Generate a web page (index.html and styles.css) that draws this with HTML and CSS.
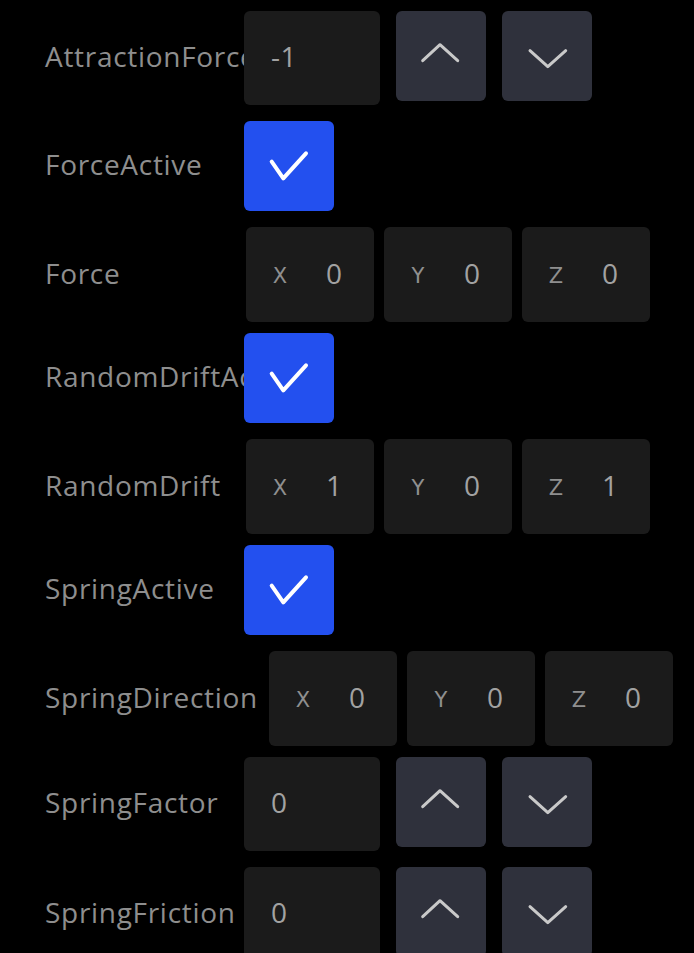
FILE: index.html
```html
<!DOCTYPE html>
<html>
<head>
<meta charset="utf-8">
<link rel="stylesheet" href="styles.css">
</head>
<body>
<div class="panel">
  <div class="row row-xyz row-partial">
    <span class="label"></span>
    <div class="xyz">
      <div class="axis-box"></div>
      <div class="axis-box"></div>
      <div class="axis-box"></div>
    </div>
  </div>

  <div class="row row-num">
    <span class="label">AttractionForce</span>
    <div class="num-input"><span class="num-val">-1</span></div>
    <button class="step"><svg viewBox="0 0 90 90" class="chev"><polyline points="26.7,49.7 44,33.7 61.7,49.7"/></svg></button>
    <button class="step"><svg viewBox="0 0 90 90" class="chev"><polyline points="28,39.7 45.8,55.7 63.7,39.7"/></svg></button>
  </div>

  <div class="row row-check">
    <span class="label">ForceActive</span>
    <div class="check"><svg viewBox="0 0 90 90" class="tick"><polyline points="27.7,40.7 39.3,57.3 62,32.3"/></svg></div>
  </div>

  <div class="row row-xyz">
    <span class="label">Force</span>
    <div class="xyz">
      <div class="axis-box"><span class="axis">X</span><span class="val">0</span></div>
      <div class="axis-box"><span class="axis">Y</span><span class="val">0</span></div>
      <div class="axis-box"><span class="axis">Z</span><span class="val">0</span></div>
    </div>
  </div>

  <div class="row row-check">
    <span class="label">RandomDriftActive</span>
    <div class="check"><svg viewBox="0 0 90 90" class="tick"><polyline points="27.7,40.7 39.3,57.3 62,32.3"/></svg></div>
  </div>

  <div class="row row-xyz">
    <span class="label">RandomDrift</span>
    <div class="xyz">
      <div class="axis-box"><span class="axis">X</span><span class="val">1</span></div>
      <div class="axis-box"><span class="axis">Y</span><span class="val">0</span></div>
      <div class="axis-box"><span class="axis">Z</span><span class="val">1</span></div>
    </div>
  </div>

  <div class="row row-check">
    <span class="label">SpringActive</span>
    <div class="check"><svg viewBox="0 0 90 90" class="tick"><polyline points="27.7,40.7 39.3,57.3 62,32.3"/></svg></div>
  </div>

  <div class="row row-xyz">
    <span class="label">SpringDirection</span>
    <div class="xyz">
      <div class="axis-box"><span class="axis">X</span><span class="val">0</span></div>
      <div class="axis-box"><span class="axis">Y</span><span class="val">0</span></div>
      <div class="axis-box"><span class="axis">Z</span><span class="val">0</span></div>
    </div>
  </div>

  <div class="row row-num">
    <span class="label">SpringFactor</span>
    <div class="num-input"><span class="num-val">0</span></div>
    <button class="step"><svg viewBox="0 0 90 90" class="chev"><polyline points="26.7,49.7 44,33.7 61.7,49.7"/></svg></button>
    <button class="step"><svg viewBox="0 0 90 90" class="chev"><polyline points="28,39.7 45.8,55.7 63.7,39.7"/></svg></button>
  </div>

  <div class="row row-num">
    <span class="label">SpringFriction</span>
    <div class="num-input"><span class="num-val">0</span></div>
    <button class="step"><svg viewBox="0 0 90 90" class="chev"><polyline points="26.7,49.7 44,33.7 61.7,49.7"/></svg></button>
    <button class="step"><svg viewBox="0 0 90 90" class="chev"><polyline points="28,39.7 45.8,55.7 63.7,39.7"/></svg></button>
  </div>
</div>
</body>
</html>
```

FILE: styles.css
```css
html, body {
  margin: 0;
  padding: 0;
  background: #000;
  overflow: hidden;
}

.panel {
  padding-left: 45px;
  margin-top: -95px;
  font-family: "Open Sans", "Noto Sans", sans-serif;
}

.row {
  display: flex;
  align-items: center;
}

.label {
  color: #8e8e8e;
  font-size: 28px;
  letter-spacing: 0.7px;
  white-space: nowrap;
  line-height: 1;
  padding-bottom: 4px;
}

/* numeric rows */
.row-num {
  height: 94px;
  margin-bottom: 16px;
  align-items: flex-start;
}
.row-num .label,
.row-check .label {
  flex: none;
  width: 199px;
  align-self: center;
}

.num-input {
  box-sizing: border-box;
  flex: none;
  width: 136px;
  height: 94px;
  background: #1b1b1b;
  border-radius: 6px;
  padding-left: 27px;
  display: flex;
  align-items: center;
  color: #a2a2a2;
  font-size: 28px;
  letter-spacing: 0.5px;
  margin-right: 16px;
}

.num-val {
  line-height: 1;
  padding-bottom: 4px;
}

.step {
  flex: none;
  width: 90px;
  height: 90px;
  padding: 0;
  border: none;
  background: #2f313c;
  border-radius: 6px;
  margin-right: 16px;
  display: block;
}

.chev {
  display: block;
  width: 90px;
  height: 90px;
  fill: none;
  stroke: #c9c9c9;
  stroke-width: 3;
  stroke-linecap: round;
  stroke-linejoin: round;
}

/* checkbox rows */
.row-check {
  height: 90px;
  margin-bottom: 16px;
}

.check {
  flex: none;
  width: 90px;
  height: 90px;
  background: #2350ef;
  border-radius: 6px;
}

.tick {
  display: block;
  width: 90px;
  height: 90px;
  fill: none;
  stroke: #fff;
  stroke-width: 4;
  stroke-linecap: round;
  stroke-linejoin: round;
}

/* xyz rows */
.row-xyz {
  height: 95px;
  margin-bottom: 11px;
}
.row-xyz .label {
  flex: none;
  min-width: 190px;
  margin-right: 11px;
}

.xyz {
  display: flex;
  gap: 10px;
}

.axis-box {
  box-sizing: border-box;
  width: 128px;
  height: 95px;
  background: #1b1b1b;
  border-radius: 6px;
  display: flex;
  align-items: center;
  padding-left: 20px;
}

.axis {
  width: 28px;
  text-align: center;
  font-family: "DejaVu Sans", sans-serif;
  font-size: 21px;
  line-height: 1;
  padding-top: 3px;
  color: #8f8f8f;
}

.val {
  width: 28px;
  margin-left: 26px;
  text-align: center;
  font-size: 28px;
  line-height: 1;
  padding-bottom: 4px;
  color: #a2a2a2;
}
```
